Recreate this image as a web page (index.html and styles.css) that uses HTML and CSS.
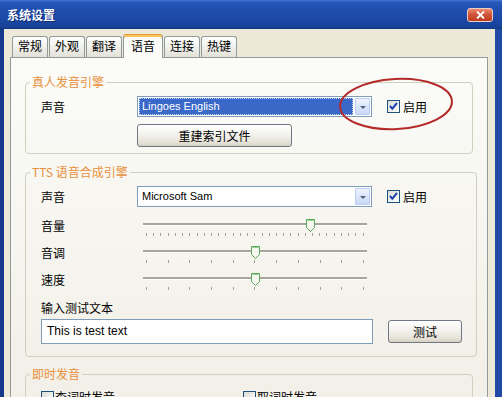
FILE: index.html
```html
<!DOCTYPE html>
<html lang="zh-CN">
<head>
    <meta charset="UTF-8">
    <meta name="viewport" content="width=device-width, initial-scale=1.0">
    <title>系统设置</title>
    <link rel="stylesheet" href="styles.css">
</head>
<body>
    <div class="window">
        <div class="titlebar">
            <span class="title">系统设置</span>
            <button class="close-btn">
                <svg width="9" height="8" viewBox="0 0 9 8"><path d="M1 0.5 L8 7.5 M8 0.5 L1 7.5" stroke="#fff" stroke-width="1.8"/></svg>
            </button>
        </div>

        <div class="frame">
            <div class="tabs">
                <div class="tab">常规</div>
                <div class="tab">外观</div>
                <div class="tab">翻译</div>
                <div class="tab active">语音</div>
                <div class="tab">连接</div>
                <div class="tab">热键</div>
            </div>

            <div class="panel">
                <!-- real voice engine -->
                <fieldset class="group">
                    <legend>真人发音引擎</legend>
                    <div class="group-body">
                        <div class="row">
                            <span class="field-label">声音</span>
                            <div class="combo focused">
                                <span class="combo-text">Lingoes English</span>
                                <span class="combo-btn"></span>
                            </div>
                            <label class="check">
                                <span class="box"><svg width="13" height="13" viewBox="0 0 13 13"><path d="M3 6 L5.3 8.6 L10 3" fill="none" stroke="#2244b0" stroke-width="2"/></svg></span>
                                启用
                            </label>
                        </div>
                        <div class="row">
                            <button class="btn btn-wide">重建索引文件</button>
                        </div>
                    </div>
                </fieldset>

                <!-- TTS engine -->
                <fieldset class="group tts">
                    <legend>TTS 语音合成引擎</legend>
                    <div class="group-body">
                        <div class="row">
                            <span class="field-label">声音</span>
                            <div class="combo">
                                <span class="combo-text">Microsoft Sam</span>
                                <span class="combo-btn"></span>
                            </div>
                            <label class="check">
                                <span class="box"><svg width="13" height="13" viewBox="0 0 13 13"><path d="M3 6 L5.3 8.6 L10 3" fill="none" stroke="#2244b0" stroke-width="2"/></svg></span>
                                启用
                            </label>
                        </div>

                        <div class="row slider-row first">
                            <span class="field-label">音量</span>
                            <div class="slider">
                                <div class="track"></div>
                                <div class="ticks">
                                    <i></i><i></i><i></i><i></i><i></i><i></i><i></i><i></i><i></i><i></i>
                                    <i></i><i></i><i></i><i></i><i></i><i></i><i></i><i></i><i></i><i></i>
                                    <i></i><i></i><i></i><i></i><i></i><i></i><i></i><i></i><i></i><i></i>
                                    <i></i>
                                </div>
                                <svg class="thumb" style="left: 163px;" width="9" height="13" viewBox="0 0 9 13"><path d="M0.5 0.5 H8.5 V8.5 L4.5 12.5 L0.5 8.5 Z" fill="#f7f7f2" stroke="#5aa65a"/><path d="M1.5 1.5 H7.5" stroke="#8fd08a"/></svg>
                            </div>
                        </div>

                        <div class="row slider-row">
                            <span class="field-label">音调</span>
                            <div class="slider">
                                <div class="track"></div>
                                <div class="ticks">
                                    <i></i><i></i><i></i><i></i><i></i><i></i><i></i><i></i><i></i><i></i><i></i>
                                </div>
                                <svg class="thumb" style="left: 108px;" width="9" height="13" viewBox="0 0 9 13"><path d="M0.5 0.5 H8.5 V8.5 L4.5 12.5 L0.5 8.5 Z" fill="#f7f7f2" stroke="#5aa65a"/><path d="M1.5 1.5 H7.5" stroke="#8fd08a"/></svg>
                            </div>
                        </div>

                        <div class="row slider-row">
                            <span class="field-label">速度</span>
                            <div class="slider">
                                <div class="track"></div>
                                <div class="ticks">
                                    <i></i><i></i><i></i><i></i><i></i><i></i><i></i><i></i><i></i><i></i><i></i>
                                </div>
                                <svg class="thumb" style="left: 108px;" width="9" height="13" viewBox="0 0 9 13"><path d="M0.5 0.5 H8.5 V8.5 L4.5 12.5 L0.5 8.5 Z" fill="#f7f7f2" stroke="#5aa65a"/><path d="M1.5 1.5 H7.5" stroke="#8fd08a"/></svg>
                            </div>
                        </div>

                        <div class="caption">输入测试文本</div>
                        <div class="row test-row">
                            <div class="textbox">This is test text</div>
                            <button class="btn btn-test">测试</button>
                        </div>
                    </div>
                </fieldset>

                <!-- instant pronunciation -->
                <fieldset class="group instant">
                    <legend>即时发音</legend>
                    <div class="group-body">
                        <div class="check-grid">
                            <label class="check"><span class="box"></span>查词时发音</label>
                            <label class="check"><span class="box"></span>取词时发音</label>
                        </div>
                    </div>
                </fieldset>
            </div>
        </div>

        <svg class="annotation" width="122" height="60" viewBox="0 0 122 60">
            <ellipse cx="60" cy="29" rx="56" ry="25" fill="none" stroke="#b42a2a" stroke-width="2" transform="rotate(-3 60 29)"/>
        </svg>
    </div>
</body>
</html>
```

FILE: styles.css
```css
* {
    box-sizing: border-box;
}

body {
    margin: 0;
    width: 502px;
    height: 397px;
    overflow: hidden;
    background: #ece9d8;
    font-family: "Noto Sans CJK SC", "Liberation Sans", sans-serif;
    font-size: 12px;
    color: #000;
}

.window {
    position: relative;
    height: 397px;
    display: flex;
    flex-direction: column;
}

.titlebar {
    flex: none;
    height: 29px;
    display: flex;
    align-items: center;
    justify-content: space-between;
    padding: 0 9px 0 7px;
    background: linear-gradient(to bottom, #4a7bd6 0, #2858bb 2px, #2050b0 8px, #1b48a4 20px, #184298 27px, #12357f 29px);
}

.title {
    color: #fff;
    font-weight: bold;
    font-size: 12px;
    text-shadow: 1px 1px 0 #0d2a70;
}

.close-btn {
    width: 26px;
    height: 14px;
    padding: 0;
    border: 1px solid #efcfc4;
    border-radius: 3px;
    background: linear-gradient(to bottom, #e88a70, #d1553a 45%, #bb3b20);
    display: flex;
    align-items: center;
    justify-content: center;
}

.frame {
    flex: 1;
    min-height: 0;
    display: flex;
    flex-direction: column;
    border-left: 4px solid #17398c;
    border-right: 7px solid #1f4aa6;
    padding: 5px 7px 0 6px;
}

/* tabs */
.tabs {
    display: flex;
    align-items: flex-end;
    height: 23px;
    padding-left: 2px;
    position: relative;
    z-index: 1;
}

.tab {
    width: 36px;
    height: 21px;
    margin-right: 1px;
    border: 1px solid #919b9c;
    border-bottom: none;
    border-radius: 3px 3px 0 0;
    background: linear-gradient(to bottom, #fff, #f3f3ef 40%, #e2e1d9);
    text-align: center;
    line-height: 17px;
}

.tab.active {
    width: 40px;
    height: 24px;
    margin-bottom: -1px;
    border-top: 1px solid #e69a32;
    box-shadow: inset 0 2px 0 #f6c35c;
    background: #fbfbf8;
    line-height: 19px;
    padding-top: 1px;
}

.panel {
    flex: 1;
    border: 1px solid #919b9c;
    background: linear-gradient(to bottom, #fbfbf8, #f2f0e8 320px);
    padding: 0 14px;
}

/* group boxes */
.group {
    margin: 17px 0 0;
    padding: 0;
    border: 1px solid #d0d0bf;
    border-radius: 4px;
}

.group legend {
    margin-left: 4px;
    padding: 0 2px;
    color: #e8903a;
    line-height: 14px;
}

.group-body {
    padding: 7px 14px 6px 15px;
}

.group.tts {
    margin-top: 11px;
}

.group.tts .group-body {
    padding-bottom: 12px;
}

.group.instant {
    margin-top: 10px;
}

.row {
    display: flex;
    align-items: center;
}

.field-label {
    flex: none;
    width: 96px;
    line-height: 18px;
}

/* combo box */
.combo {
    width: 235px;
    height: 21px;
    border: 1px solid #7f9db9;
    background: #fff;
    display: flex;
    align-items: stretch;
    padding: 1px;
}

.combo-text {
    flex: 1;
    padding-left: 3px;
    font-family: "Liberation Sans", sans-serif;
    font-size: 11px;
    line-height: 17px;
}

.combo.focused .combo-text {
    margin-right: 2px;
    background: #3a68c8;
    color: #fff;
    outline: 1px dotted #c9d6f0;
    outline-offset: -1px;
}

.combo-btn {
    position: relative;
    width: 15px;
    border: 1px solid #bccdf2;
    border-radius: 1px;
    background: linear-gradient(to bottom, #eef3fd, #c9d8f6);
}

.combo-btn::after {
    content: "";
    position: absolute;
    left: 4px;
    top: 7px;
    border-left: 3px solid transparent;
    border-right: 3px solid transparent;
    border-top: 3px solid #4d6185;
}

/* checkbox */
.check {
    display: inline-flex;
    align-items: center;
    gap: 1px;
    line-height: 18px;
}

.row .check {
    margin-left: 15px;
    gap: 3px;
}

.box {
    flex: none;
    width: 13px;
    height: 13px;
    border: 1px solid #1c5180;
    background: linear-gradient(135deg, #dcdcd5, #fff);
    position: relative;
}

.box svg {
    position: absolute;
    left: -1px;
    top: -1px;
}

.check-grid {
    display: grid;
    grid-template-columns: 202px 202px;
}

/* buttons */
.btn {
    height: 23px;
    padding: 0;
    border: 1px solid #6f7884;
    border-radius: 3px;
    background: linear-gradient(to bottom, #fff, #f3f2ed 45%, #e4e1d6 85%, #d5cfc1);
    font-family: "Noto Sans CJK SC", sans-serif;
    font-size: 12px;
    color: #000;
}

.btn-wide {
    width: 155px;
    margin: 7px 0 0 96px;
}

.btn-test {
    width: 74px;
    margin-left: 15px;
}

/* sliders */
.slider-row {
    height: 27px;
    align-items: flex-start;
}

.slider-row.first {
    margin-top: 10px;
}

.slider {
    position: relative;
    width: 224px;
    height: 27px;
    margin-left: 6px;
}

.track {
    height: 3px;
    margin-top: 6px;
    border-top: 2px solid #a7a69c;
    background: #fff;
}

.ticks {
    display: flex;
    justify-content: space-between;
    height: 3px;
    margin-top: 7px;
    padding: 0 3px;
}

.ticks i {
    width: 1px;
    height: 3px;
    background: #a3a298;
}

.thumb {
    position: absolute;
    top: 2px;
}

/* test text */
.caption {
    margin-top: 1px;
    line-height: 18px;
}

.test-row {
    margin-top: 2px;
}

.textbox {
    width: 332px;
    height: 25px;
    border: 1px solid #7f9db9;
    background: #fff;
    padding-left: 5px;
    font-family: "Liberation Sans", sans-serif;
    font-size: 12px;
    line-height: 23px;
}

.annotation {
    position: absolute;
    left: 336px;
    top: 75px;
}
```
